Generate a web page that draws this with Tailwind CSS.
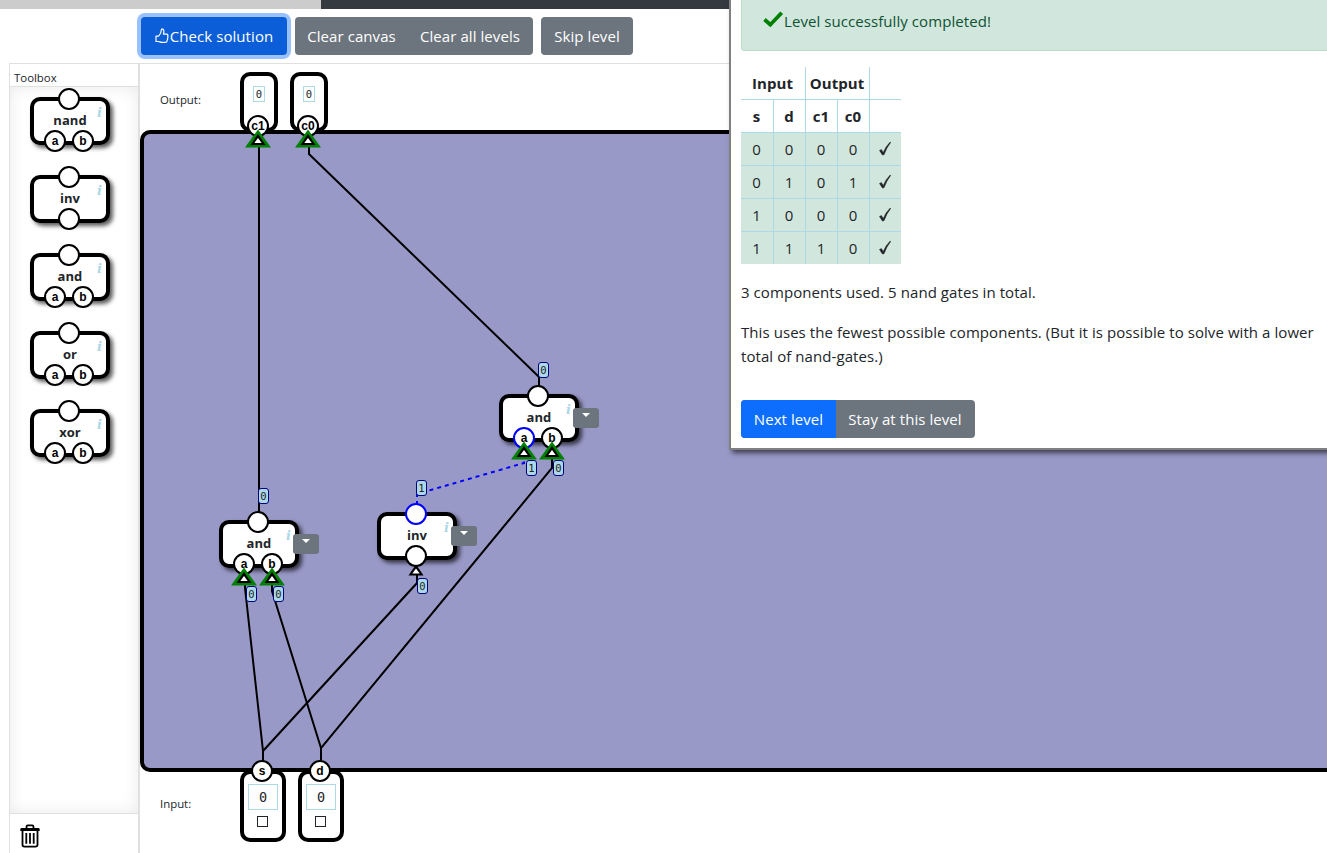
<!DOCTYPE html>
<html lang="en">
<head>
<meta charset="utf-8">
<title>Logic level</title>
<script src="https://cdn.jsdelivr.net/npm/@tailwindcss/browser@4"></script>
</head>
<body class="relative h-[853px] w-[1327px] overflow-hidden bg-white font-['Open_Sans',sans-serif] text-[15px] leading-6 tracking-[0.07px] text-[#212529]">
<div class="flex h-full flex-col">
  <div class="flex h-[9px] shrink-0"><div class="w-[321px] bg-[#ccc]"></div><div class="flex-1 bg-[#343a40]"></div></div>

  <nav class="flex h-[54px] shrink-0 gap-2 pt-2 pl-[141px] whitespace-nowrap text-white">
    <button class="flex h-[38px] w-[146px] items-center justify-center rounded bg-[#0b5ed7] shadow-[0_0_0_4px_#98c1fe]">
      <svg class="mr-px h-4 w-[14px] shrink-0" viewBox="0 0 14 16" fill="none" stroke="white" stroke-width="1.2" stroke-linejoin="round"><path d="M1 8.200h2.600C5.200 6.600 6.400 5.200 6.500 1.200 8.800.6 9.500 2.600 8.400 6.200h3.300c1.200 0 1.600 1.200.9 2 .6.700.5 1.500-.1 2 .4.800.2 1.400-.4 1.900.1 1.700-.6 2.300-2 2.300H6.800c-1.300 0-2-.6-3.200-.9H1z"/></svg>
      <span>Check solution</span>
    </button>
    <div class="flex h-[38px] w-[238px] rounded bg-[#6c757d]">
      <button class="w-[113px]">Clear canvas</button><button class="w-[125px] pr-px">Clear all levels</button>
    </div>
    <button class="h-[38px] w-[92px] rounded bg-[#6c757d]">Skip level</button>
  </nav>

  <div class="flex min-h-0 flex-1 pl-[9px]">
    <aside class="flex w-[131px] shrink-0 flex-col border-t border-r-2 border-l border-[#e0e0e0]">
      <div class="h-[23px] shrink-0 border-b border-[#e0e0e0] pt-[2px] pl-1 text-[11.4px] tracking-normal"><span>Toolbox</span></div>
      <div class="flex h-[726px] shrink-0 flex-col gap-[30px] pt-[10px] pl-5 shadow-[inset_0_0_16px_rgba(0,0,0,.09)]">
        <div class="relative flex h-12 w-20 shrink-0 items-center justify-center rounded-[10px] border-4 border-black bg-white pb-[2px] text-[13px] font-bold shadow-[3px_3px_4px_rgba(0,0,0,.65)]">nand
          <i class="absolute top-1 right-1 font-['DejaVu_Serif',serif] text-[13px] leading-4 text-[#add8e6]">i</i>
          <b class="absolute -top-[13px] left-6 size-[22px] rounded-full border-2 border-black bg-white"></b>
          <b class="absolute top-[29px] left-[10px] flex size-[22px] items-center justify-center rounded-full border-2 border-black bg-white font-['Liberation_Sans',sans-serif] text-[12px] leading-none text-black">a</b>
          <b class="absolute top-[29px] left-[38px] flex size-[22px] items-center justify-center rounded-full border-2 border-black bg-white font-['Liberation_Sans',sans-serif] text-[12px] leading-none text-black">b</b>
        </div>
        <div class="relative flex h-12 w-20 shrink-0 items-center justify-center rounded-[10px] border-4 border-black bg-white pb-[2px] text-[13px] font-bold shadow-[3px_3px_4px_rgba(0,0,0,.65)]">inv
          <i class="absolute top-1 right-1 font-['DejaVu_Serif',serif] text-[13px] leading-4 text-[#add8e6]">i</i>
          <b class="absolute -top-[13px] left-6 size-[22px] rounded-full border-2 border-black bg-white"></b>
          <b class="absolute top-[29px] left-6 size-[22px] rounded-full border-2 border-black bg-white"></b>
        </div>
        <div class="relative flex h-12 w-20 shrink-0 items-center justify-center rounded-[10px] border-4 border-black bg-white pb-[2px] text-[13px] font-bold shadow-[3px_3px_4px_rgba(0,0,0,.65)]">and
          <i class="absolute top-1 right-1 font-['DejaVu_Serif',serif] text-[13px] leading-4 text-[#add8e6]">i</i>
          <b class="absolute -top-[13px] left-6 size-[22px] rounded-full border-2 border-black bg-white"></b>
          <b class="absolute top-[29px] left-[10px] flex size-[22px] items-center justify-center rounded-full border-2 border-black bg-white font-['Liberation_Sans',sans-serif] text-[12px] leading-none text-black">a</b>
          <b class="absolute top-[29px] left-[38px] flex size-[22px] items-center justify-center rounded-full border-2 border-black bg-white font-['Liberation_Sans',sans-serif] text-[12px] leading-none text-black">b</b>
        </div>
        <div class="relative flex h-12 w-20 shrink-0 items-center justify-center rounded-[10px] border-4 border-black bg-white pb-[2px] text-[13px] font-bold shadow-[3px_3px_4px_rgba(0,0,0,.65)]">or
          <i class="absolute top-1 right-1 font-['DejaVu_Serif',serif] text-[13px] leading-4 text-[#add8e6]">i</i>
          <b class="absolute -top-[13px] left-6 size-[22px] rounded-full border-2 border-black bg-white"></b>
          <b class="absolute top-[29px] left-[10px] flex size-[22px] items-center justify-center rounded-full border-2 border-black bg-white font-['Liberation_Sans',sans-serif] text-[12px] leading-none text-black">a</b>
          <b class="absolute top-[29px] left-[38px] flex size-[22px] items-center justify-center rounded-full border-2 border-black bg-white font-['Liberation_Sans',sans-serif] text-[12px] leading-none text-black">b</b>
        </div>
        <div class="relative flex h-12 w-20 shrink-0 items-center justify-center rounded-[10px] border-4 border-black bg-white pb-[2px] text-[13px] font-bold shadow-[3px_3px_4px_rgba(0,0,0,.65)]">xor
          <i class="absolute top-1 right-1 font-['DejaVu_Serif',serif] text-[13px] leading-4 text-[#add8e6]">i</i>
          <b class="absolute -top-[13px] left-6 size-[22px] rounded-full border-2 border-black bg-white"></b>
          <b class="absolute top-[29px] left-[10px] flex size-[22px] items-center justify-center rounded-full border-2 border-black bg-white font-['Liberation_Sans',sans-serif] text-[12px] leading-none text-black">a</b>
          <b class="absolute top-[29px] left-[38px] flex size-[22px] items-center justify-center rounded-full border-2 border-black bg-white font-['Liberation_Sans',sans-serif] text-[12px] leading-none text-black">b</b>
        </div>
      </div>
      <div class="min-h-0 flex-1 border-t border-[#e0e0e0] pt-[10px] pl-[10px]">
        <svg class="h-6 w-5" viewBox="0 0 20 25" preserveAspectRatio="none" fill="none" stroke="black"><path d="M6.500 4.500V2.800q0-1.300 1.300-1.300h4.400q1.300 0 1.300 1.300v1.700" stroke-width="1.800"/><path d="M1 6.500V5.500q0-.7.8-.7h16.400q.8 0 .8.700v1z" fill="black" stroke-width="1.400"/><path d="M2.500 7v14.500q0 2 2 2h11q2 0 2-2V7" stroke-width="1.800"/><path d="M6.300 9.500v11M10 9.500v11M13.700 9.500v11" stroke-width="1.800"/></svg>
      </div>
    </aside>

    <main class="flex min-w-0 flex-1 flex-col border-t border-[#e0e0e0]">
      <section class="flex h-[66px] shrink-0 pt-2">
        <div class="w-[100px] pt-4 pl-5 text-[11.4px] tracking-normal"><span>Output:</span></div>
        <div class="flex gap-3">
          <div class="flex h-[60px] w-[38px] justify-center rounded-[10px] border-4 border-black pt-[10px]"><span class="flex h-4 w-3 items-center justify-center border border-[#add8e6] font-['DejaVu_Sans_Mono',monospace] text-[10.5px] leading-none">0</span></div>
          <div class="flex h-[60px] w-[38px] justify-center rounded-[10px] border-4 border-black pt-[10px]"><span class="flex h-4 w-3 items-center justify-center border border-[#add8e6] font-['DejaVu_Sans_Mono',monospace] text-[10.5px] leading-none">0</span></div>
        </div>
      </section>
      <section class="-mr-5 h-[642px] shrink-0 rounded-[10px] border-4 border-black bg-[#9999c8]"></section>
      <section class="-mt-[2px] flex h-[83px] shrink-0">
        <div class="w-[100px] pt-[22px] pl-5 text-[11.4px] tracking-normal"><span>Input:</span></div>
        <div class="flex gap-3">
          <div class="flex h-[72px] w-[46px] flex-col items-center rounded-[10px] border-4 border-black pt-[10px]"><span class="flex h-[26px] w-[30px] shrink-0 items-center justify-center border border-[#add8e6] pt-px font-['DejaVu_Sans_Mono',monospace] text-[13.5px] leading-none">0</span><span class="mt-[6px] mr-px h-[11px] w-[11px] shrink-0 border-[1.5px] border-[#212529]"></span></div>
          <div class="flex h-[72px] w-[46px] flex-col items-center rounded-[10px] border-4 border-black pt-[10px]"><span class="flex h-[26px] w-[30px] shrink-0 items-center justify-center border border-[#add8e6] pt-px font-['DejaVu_Sans_Mono',monospace] text-[13.5px] leading-none">0</span><span class="mt-[6px] mr-px h-[11px] w-[11px] shrink-0 border-[1.5px] border-[#212529]"></span></div>
        </div>
      </section>
    </main>
  </div>
</div>

<!-- Wires -->
<svg class="absolute top-0 left-0 h-[853px] w-[729px]" fill="none" stroke="black" stroke-width="2">
  <path d="M259 140V515"/>
  <path d="M309 140V154L539 377V388"/>
  <path d="M552 455V468L321 748V762"/>
  <path d="M417 570V583L263 751V762"/>
  <path d="M245 580V588L263 751"/>
  <path d="M272 580V591L321 748"/>
  <path d="M417 505V494L524 463V455" stroke="blue" stroke-dasharray="4 4"/>
</svg>

<!-- Gates on the canvas -->
<div class="absolute top-[394px] left-[499px] flex h-12 w-20 items-center justify-center rounded-[10px] border-4 border-black bg-white pb-[2px] text-[13px] font-bold shadow-[3px_3px_4px_rgba(0,0,0,.65)]">and
  <b class="absolute -top-[13px] left-6 size-[22px] rounded-full border-2 border-black bg-white"></b>
  <b class="absolute top-[29px] left-[10px] flex size-[22px] items-center justify-center rounded-full border-2 border-[#0000ff] bg-white font-['Liberation_Sans',sans-serif] text-[12px] leading-none text-black">a</b>
  <b class="absolute top-[29px] left-[38px] flex size-[22px] items-center justify-center rounded-full border-2 border-black bg-white font-['Liberation_Sans',sans-serif] text-[12px] leading-none text-black">b</b>
  <span class="absolute top-[10px] left-[70px] flex h-5 w-[26px] justify-center rounded-[3px] bg-[#6c757d] pt-[5px]"><svg class="h-1 w-2" viewBox="0 0 8 4"><path d="M0 0h8L4 4z" fill="white"/></svg></span>
  <i class="absolute top-1 right-1 font-['DejaVu_Serif',serif] text-[13px] leading-4 text-[#add8e6]">i</i>
</div>
<div class="absolute top-[520px] left-[219px] flex h-12 w-20 items-center justify-center rounded-[10px] border-4 border-black bg-white pb-[2px] text-[13px] font-bold shadow-[3px_3px_4px_rgba(0,0,0,.65)]">and
  <b class="absolute -top-[13px] left-6 size-[22px] rounded-full border-2 border-black bg-white"></b>
  <b class="absolute top-[29px] left-[10px] flex size-[22px] items-center justify-center rounded-full border-2 border-black bg-white font-['Liberation_Sans',sans-serif] text-[12px] leading-none text-black">a</b>
  <b class="absolute top-[29px] left-[38px] flex size-[22px] items-center justify-center rounded-full border-2 border-black bg-white font-['Liberation_Sans',sans-serif] text-[12px] leading-none text-black">b</b>
  <span class="absolute top-[10px] left-[70px] flex h-5 w-[26px] justify-center rounded-[3px] bg-[#6c757d] pt-[5px]"><svg class="h-1 w-2" viewBox="0 0 8 4"><path d="M0 0h8L4 4z" fill="white"/></svg></span>
  <i class="absolute top-1 right-1 font-['DejaVu_Serif',serif] text-[13px] leading-4 text-[#add8e6]">i</i>
</div>
<div class="absolute top-[512px] left-[377px] flex h-12 w-20 items-center justify-center rounded-[10px] border-4 border-black bg-white pb-[2px] text-[13px] font-bold shadow-[3px_3px_4px_rgba(0,0,0,.65)]">inv
  <b class="absolute -top-[13px] left-6 size-[22px] rounded-full border-2 border-[#0000ff] bg-white"></b>
  <b class="absolute top-[29px] left-6 size-[22px] rounded-full border-2 border-black bg-white"></b>
  <span class="absolute top-[10px] left-[70px] flex h-5 w-[26px] justify-center rounded-[3px] bg-[#6c757d] pt-[5px]"><svg class="h-1 w-2" viewBox="0 0 8 4"><path d="M0 0h8L4 4z" fill="white"/></svg></span>
  <i class="absolute top-1 right-1 font-['DejaVu_Serif',serif] text-[13px] leading-4 text-[#add8e6]">i</i>
</div>

<!-- Terminals -->
<b class="absolute top-[115px] left-[247px] flex size-[22px] items-center justify-center rounded-full border-2 border-black bg-white font-['Liberation_Sans',sans-serif] text-[12px] leading-none text-black">c1</b>
<b class="absolute top-[115px] left-[297px] flex size-[22px] items-center justify-center rounded-full border-2 border-black bg-white font-['Liberation_Sans',sans-serif] text-[12px] leading-none text-black">c0</b>
<b class="absolute top-[760px] left-[251px] flex size-[22px] items-center justify-center rounded-full border-2 border-black bg-white font-['Liberation_Sans',sans-serif] text-[12px] leading-none text-black">s</b>
<b class="absolute top-[760px] left-[309px] flex size-[22px] items-center justify-center rounded-full border-2 border-black bg-white font-['Liberation_Sans',sans-serif] text-[12px] leading-none text-black">d</b>

<!-- Input arrows -->
<svg class="absolute top-0 left-0 h-[853px] w-[729px]">
  <defs>
    <g id="tri"><path d="M0 -2.500L7.500 8.500H-7.500Z" fill="black"/><path d="M0 1.400L3.700 6.500H-3.700Z" fill="white"/></g>
    <g id="ok"><path d="M0 -7.500L13 10.500H-13Z" fill="#008000"/><use href="#tri" y="-.5"/></g>
  </defs>
  <use href="#ok" x="258" y="137"/><use href="#ok" x="308" y="137"/>
  <use href="#ok" x="524" y="449"/><use href="#ok" x="552" y="449"/>
  <use href="#ok" x="244" y="575"/><use href="#ok" x="272" y="575"/>
  <use href="#tri" x="416" y="567"/>
</svg>

<!-- Wire values -->
<div class="font-['DejaVu_Sans_Mono',monospace] text-[10.5px] leading-none tracking-normal">
  <span class="absolute top-[362px] left-[538px] flex h-4 w-[11px] items-center justify-center rounded-[3px] border border-[#000080] bg-[#add8e6]">0</span>
  <span class="absolute top-[460px] left-[526px] flex h-4 w-[11px] items-center justify-center rounded-[3px] border border-[#000080] bg-[#add8e6]">1</span>
  <span class="absolute top-[460px] left-[553px] flex h-4 w-[11px] items-center justify-center rounded-[3px] border border-[#000080] bg-[#add8e6]">0</span>
  <span class="absolute top-[488px] left-[258px] flex h-4 w-[11px] items-center justify-center rounded-[3px] border border-[#000080] bg-[#add8e6]">0</span>
  <span class="absolute top-[586px] left-[246px] flex h-4 w-[11px] items-center justify-center rounded-[3px] border border-[#000080] bg-[#add8e6]">0</span>
  <span class="absolute top-[586px] left-[273px] flex h-4 w-[11px] items-center justify-center rounded-[3px] border border-[#000080] bg-[#add8e6]">0</span>
  <span class="absolute top-[480px] left-[416px] flex h-4 w-[11px] items-center justify-center rounded-[3px] border border-[#000080] bg-[#add8e6]">1</span>
  <span class="absolute top-[578px] left-[417px] flex h-4 w-[11px] items-center justify-center rounded-[3px] border border-[#000080] bg-[#add8e6]">0</span>
</div>

<!-- Result dialog -->
<div class="absolute top-0 left-[729px] flex h-[450px] w-[640px] flex-col border-b-2 border-l-2 border-[#808080] bg-white pl-[10px] shadow-[3px_3px_5px_rgba(0,0,0,.6)]">
  <div class="flex h-[51px] shrink-0 rounded-bl border-b border-l border-[#badbcc] bg-[#d1e7dd] pt-[9px] pl-[21px] text-[#0f5132]">
    <svg class="mt-[2px] h-[17px] w-[21px]" viewBox="0 0 21 17" fill="none" stroke="#008000" stroke-width="3.800"><path d="M1.500 8.500L7.300 13.700 18.700 1.800"/></svg>
    <span>Level successfully completed!</span>
  </div>
  <table class="mt-4 w-40 table-fixed border-separate border-spacing-0 text-center leading-8 [&_td]:h-[33px] [&_td]:border-b [&_td]:border-[#add8e6] [&_td]:p-0 [&_td]:pr-px [&_td+td]:border-l [&_th]:h-[33px] [&_th]:border-b [&_th]:border-[#add8e6] [&_th]:p-0 [&_th]:pr-px [&_th+th]:border-l">
    <colgroup><col class="w-8"><col class="w-8"><col class="w-8"><col class="w-8"><col class="w-8"></colgroup>
    <tbody>
    <tr><th colspan="2">Input</th><th colspan="2">Output</th><th></th></tr>
    <tr><th>s</th><th>d</th><th>c1</th><th>c0</th><th></th></tr>
    <tr class="bg-[#d1e7dd]"><td>0</td><td>0</td><td>0</td><td>0</td><td><svg class="mx-auto h-4 w-3" viewBox="0 0 12 16"><path d="M.5 9.500L2.400 8.500 4.200 11.500Q7 5 11.200 1L11.700 1.400Q7.500 6.500 5 13.800L3.400 14Z" fill="#212529" stroke="#212529" stroke-width=".5"/></svg></td></tr>
    <tr class="bg-[#d1e7dd]"><td>0</td><td>1</td><td>0</td><td>1</td><td><svg class="mx-auto h-4 w-3" viewBox="0 0 12 16"><path d="M.5 9.500L2.400 8.500 4.200 11.500Q7 5 11.200 1L11.700 1.400Q7.500 6.500 5 13.800L3.400 14Z" fill="#212529" stroke="#212529" stroke-width=".5"/></svg></td></tr>
    <tr class="bg-[#d1e7dd]"><td>1</td><td>0</td><td>0</td><td>0</td><td><svg class="mx-auto h-4 w-3" viewBox="0 0 12 16"><path d="M.5 9.500L2.400 8.500 4.200 11.500Q7 5 11.200 1L11.700 1.400Q7.500 6.500 5 13.800L3.400 14Z" fill="#212529" stroke="#212529" stroke-width=".5"/></svg></td></tr>
    <tr class="bg-[#d1e7dd] [&_td]:h-8! [&_td]:border-b-0!"><td>1</td><td>1</td><td>1</td><td>0</td><td><svg class="mx-auto h-4 w-3" viewBox="0 0 12 16"><path d="M.5 9.500L2.400 8.500 4.200 11.500Q7 5 11.200 1L11.700 1.400Q7.500 6.500 5 13.800L3.400 14Z" fill="#212529" stroke="#212529" stroke-width=".5"/></svg></td></tr>
    </tbody>
  </table>
  <p class="mt-4 whitespace-nowrap"><span>3 components used. 5 nand gates in total.</span></p>
  <p class="mt-4 whitespace-nowrap"><span>This uses the fewest possible components. (But it is possible to solve with a lower</span><br><span>total of nand-gates.)</span></p>
  <div class="mt-8 flex h-[38px] w-[234px] shrink-0 overflow-hidden rounded bg-[#6c757d] whitespace-nowrap text-white">
    <button class="w-[95px] bg-[#0d6efd]">Next level</button><button class="w-[139px] pr-px">Stay at this level</button>
  </div>
</div>
</body>
</html>
